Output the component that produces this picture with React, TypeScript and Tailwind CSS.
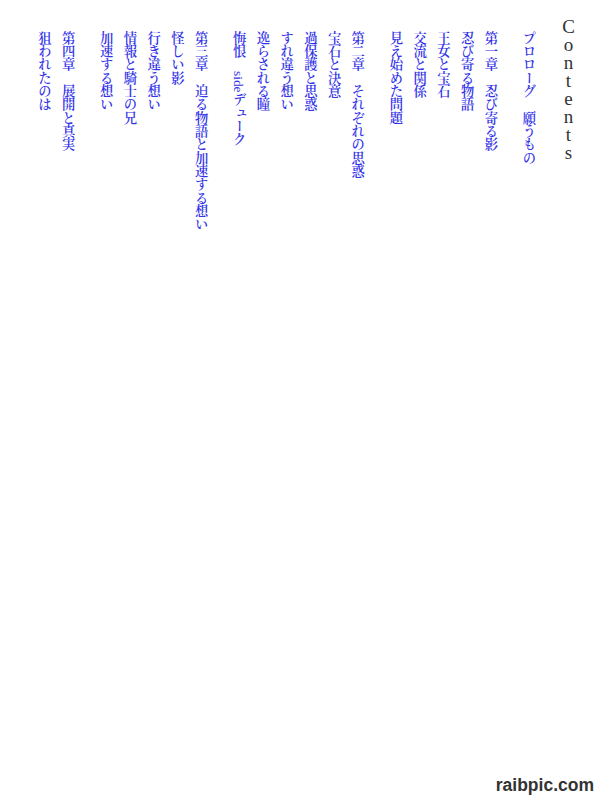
import React from "react";

const sections: React.ReactNode[][] = [
  ["プロローグ　願うもの"],
  ["第一章　忍び寄る影", "忍び寄る物語", "王女と宝石", "交流と関係", "見え始めた問題"],
  [
    "第二章　それぞれの思惑",
    "宝石と決意",
    "過保護と思惑",
    "すれ違う想い",
    "逸らされる瞳",
    <>
      悔恨　<span className="font-normal">side</span>デューク
    </>,
  ],
  ["第三章　迫る物語と加速する想い", "怪しい影", "行き違う想い", "情報と騎士の兄", "加速する想い"],
  ["第四章　展開と真実", "狙われたのは"],
];

export default function App() {
  return (
    <div className="relative w-[600px] h-[800px] bg-white overflow-hidden">
      <div className="[writing-mode:vertical-rl] w-[600px] h-[800px] pr-[20px]">
        <h1 className="[text-orientation:upright] text-[19px] leading-[24px] ml-[16px] pt-[16px] text-[#333333] font-normal tracking-[-3px] [font-family:'Liberation_Serif',serif]">
          Contents
        </h1>
        {sections.map((sec, i) => (
          <div
            key={i}
            className="ml-[14.5px] pt-[31px] text-[13.33px] leading-[23.7px] font-semibold text-[#3333e8] [font-family:'Liberation_Serif','Noto_Serif_CJK_JP','Noto_Sans_CJK_JP',serif]"
          >
            {sec.map((line, j) => (
              <div key={j}>{line}</div>
            ))}
          </div>
        ))}
      </div>
      <div className="absolute right-[6px] bottom-[2px] text-[17.5px] font-bold text-[#333333] [font-family:'Liberation_Sans',Arial,sans-serif]">
        raibpic.com
      </div>
    </div>
  );
}
